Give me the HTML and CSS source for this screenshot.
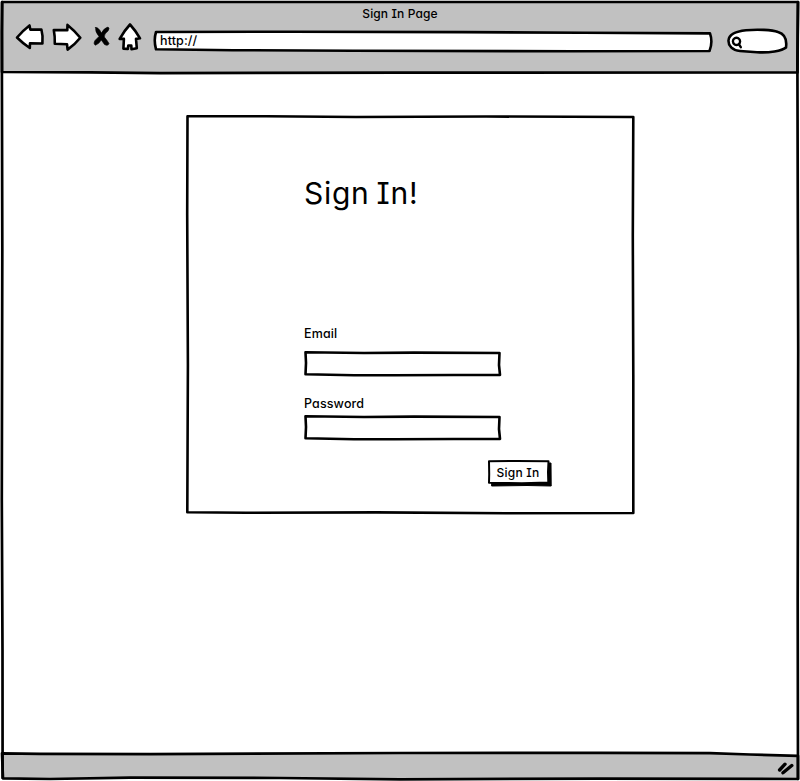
FILE: index.html
```html
<!DOCTYPE html>
<html lang="en">
<head>
<meta charset="utf-8">
<title>Sign In Page</title>
<link rel="stylesheet" href="styles.css">
</head>
<body>
<div class="window">
  <svg class="outline" viewBox="0 0 800 781" aria-hidden="true">
    <path class="chrome" d="M2 2L798 2L797.5 72.5L400 72.6L160 73.2L90 72.4L2 72Z"/>
    <path class="chrome" d="M2 753.3L40 753.8L150 754.2L400 753L600 752.8L710 753.2L750 754.5L798 755.8L798 779L600 778.6L400 779.4L280 778L130 777.7L50 779L3 778.3Z"/>
    <path class="stroke" d="M2.2 2.2L1.8 32L2.3 250L1.8 500L2.5 650L2.6 778M798 2L797.4 60L798.2 350L797.7 600L798 779"/>
  </svg>
  <header class="toolbar">
    <h1 class="title">Sign In Page</h1>
    <div class="controls">
      <svg class="nav" viewBox="0 0 132 32" aria-hidden="true">
        <path class="icon" d="M4 15.5Q10 8.5 16.5 3.5L17.3 7.6L28.4 7.5Q30.2 14 29.4 21.5L17 21.3L16.8 26Q10 21.5 4 15.5Z"/>
        <path class="icon" d="M40.8 8L54.3 8.1L54.5 2.9Q61 8 67.3 15.8Q62 22.5 54.6 27.6L54 22.2L41.8 21.8Q42 14 40.8 8Z"/>
        <path class="cross" d="M82.6 5.5Q85.5 5 88.4 11Q91 6 95 5Q97 6 95 9Q91 12 91.3 15Q94 18 96 21.5Q95 24.5 91.5 22.5L88.3 18Q86 22 82.5 23.2Q80 22 82 18.5L86 14.5Q82 10 82.6 5.5Z"/>
        <path class="icon" d="M117 2.5Q122.5 8.5 127 16.3L123 16.9L123.8 26.2L118.5 27.2L118.3 23.5L115.3 23.5L114.8 27L110.4 26.6L110.9 16.9L106.7 16.9Q111 9 117 2.5Z"/>
      </svg>
      <div class="address">
        <svg class="frame" viewBox="0 0 560 22" preserveAspectRatio="none" aria-hidden="true"><path d="M3 2L140 1.7L310 2.1L430 2.8L557 3.4Q560 12 556.5 21L420 21.2L200 20.8L80 20.2L3 19.3Q0.5 10 3 2Z"/></svg>
        <span>http://</span>
      </div>
      <svg class="search" viewBox="0 0 62 26" aria-hidden="true">
        <path class="icon" d="M1.5 12.5C2 6 10 3.2 19 2.3C30 1.2 45 1.8 51 4C58 6 60 12 59 19.5C55 23 42 25 30 24.2L13 23C5 22.5 1.3 17.5 1.5 12.5Z"/>
        <path class="glass" d="M13.1 13.4A3.6 3.6 0 1 1 13.1 13.3M11.7 16L13.8 19.2"/>
      </svg>
    </div>
  </header>
  <main class="page">
    <form class="card">
      <svg class="frame" viewBox="0 0 448 399" preserveAspectRatio="none" aria-hidden="true"><path d="M1.5 1.2L80 1.2L170 2L300 1.5L447.3 2L446.8 120L447.3 260L447.3 398L320 398.2L190 397.4L60 397.8L1.3 397.2L1.9 250L1.2 100Z"/></svg>
      <h2 class="heading">Sign In!</h2>
      <label class="label email" for="email">Email</label>
      <div class="field">
        <svg class="frame" viewBox="0 0 198 26" preserveAspectRatio="none" aria-hidden="true"><path d="M1.5 1.3L60 2L110 1.6L195.5 2L195 14L196 24L150 24L90 24.3L50 24.3L1.5 23.2L2 12Z"/></svg>
        <input id="email" type="text">
      </div>
      <label class="label password" for="password">Password</label>
      <div class="field">
        <svg class="frame" viewBox="0 0 198 26" preserveAspectRatio="none" aria-hidden="true"><path d="M1.5 1.3L60 2L110 1.6L195.5 2L195 14L196 24L150 24L90 24.3L50 24.3L1.5 23.2L2 12Z"/></svg>
        <input id="password" type="password">
      </div>
      <button class="submit" type="button">
        <svg class="frame" viewBox="0 0 65 28" aria-hidden="true"><path class="shadow" d="M5 4L64 3L64.2 26L40 25.5L5 26Z"/><path class="face" d="M2 1.3L30 1L61.5 1.2L61 12L61.3 22.5L35 23.2L2 22.8L2.2 14Z"/></svg>
        <span>Sign In</span>
      </button>
    </form>
  </main>
  <footer class="status">
    <svg class="grip" viewBox="0 0 18 16" aria-hidden="true"><path d="M2.6 10L8 4.2M6 12.8L14.8 5.5"/></svg>
  </footer>
</div>
</body>
</html>
```
FILE: styles.css
```css
* { box-sizing: border-box; }
body {
  margin: 0;
  background: #fff;
  color: #000;
  font-family: Inter, "Noto Sans", sans-serif;
  font-feature-settings: "cv08" 1, "cv11" 1;
  font-size: 12.5px;
  font-weight: 500;
  letter-spacing: 0.12px;
}
.window {
  position: relative;
  display: grid;
  grid-template-rows: 73px 1fr 28px;
  height: 781px;
  overflow: hidden;
}
.outline, .frame {
  position: absolute;
  inset: 0;
  width: 100%;
  height: 100%;
  overflow: visible;
}
svg path {
  fill: #fff;
  stroke: #000;
  stroke-width: 2.6;
  stroke-linejoin: round;
  stroke-linecap: round;
}
svg .chrome { fill: #c1c1c1; stroke-width: 2.7; }
svg .stroke { fill: none; stroke-width: 2.7; }
.toolbar { position: relative; }
.title {
  margin: 0;
  padding-top: 6px;
  font-size: 12px;
  font-weight: 500;
  line-height: 16px;
  text-align: center;
}
.controls {
  display: flex;
  align-items: flex-start;
  padding-left: 13px;
}
.nav { width: 132px; height: 32px; }
svg .cross { fill: #000; stroke-width: 0.6; }
.address {
  position: relative;
  width: 560px;
  height: 22px;
  margin: 8px 0 0 8px;
  padding-left: 7px;
  line-height: 21px;
}
.address span, .submit span { position: relative; }
.search { width: 62px; height: 26px; margin: 6px 0 0 14px; }
svg .glass { fill: none; stroke-width: 2.4; }
.page { position: relative; padding: 42px 0 0 186px; }
.card {
  position: relative;
  display: flex;
  flex-direction: column;
  width: 448px;
  height: 399px;
  padding: 58px 82px 0 118px;
}
.heading {
  margin: 0;
  font-size: 30px;
  font-weight: 400;
  line-height: 40px;
  letter-spacing: 0.7px;
  word-spacing: -2px;
  position: relative;
}
.label { position: relative; line-height: 18px; }
.email { margin-top: 112px; }
.password { margin-top: 18px; }
.field { position: relative; width: 198px; height: 26px; margin-top: 8px; }
.password + .field { margin-top: 2px; }
.field input {
  position: relative;
  width: 100%;
  height: 100%;
  padding: 3px 6px;
  border: 0;
  background: none;
  font: inherit;
  outline: 0;
}
.submit {
  position: relative;
  align-self: flex-end;
  width: 65px;
  height: 28px;
  margin-top: 19px;
  padding: 0 3px 4px 0;
  border: 0;
  background: none;
  color: #000;
  font: inherit;
  font-size: 12px;
  letter-spacing: 0.25px;
  font-feature-settings: "cv08" 1, "cv11" 1;
}
svg .shadow { fill: #000; stroke-width: 1; }
svg .face { stroke-width: 2; }
.status { position: relative; display: flex; justify-content: flex-end; padding: 7px 5px 0 0; }
.grip { width: 18px; height: 16px; }
.grip path { fill: none; stroke-width: 3.4; }
```
